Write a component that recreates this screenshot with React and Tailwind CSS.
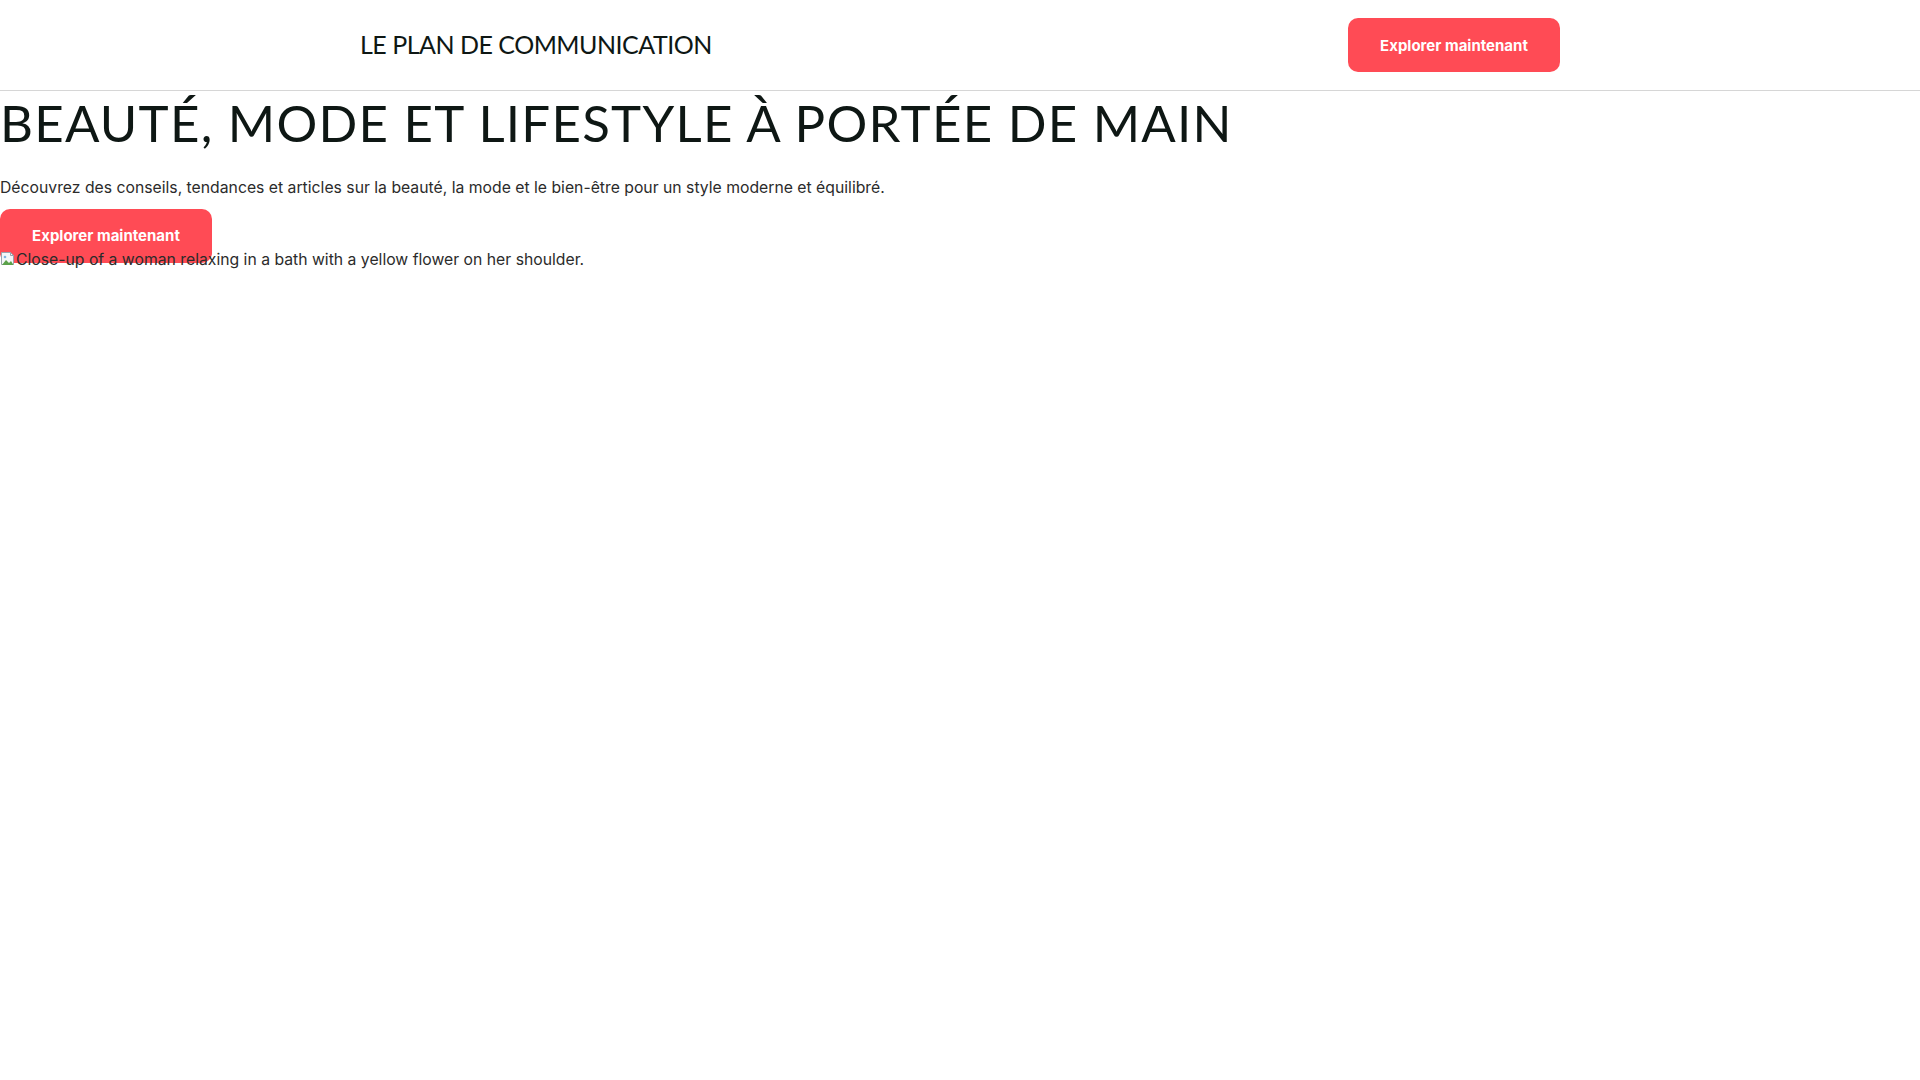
import React from 'react';

const BrokenImage = () => (
    <svg width="16" height="16" viewBox="0 0 16 16" className="inline-block align-[-2px]">
        <path d="M1.5 1.5h9l3 3v9h-12z" fill="#f4f6f8" stroke="#9aa3ad" />
        <path d="M10.5 1.5v3h3" fill="none" stroke="#9aa3ad" />
        <path d="M2 14l4-5 3 3 2-2 2.5 4z" fill="#5aa14a" />
        <circle cx="5" cy="6" r="1.3" fill="#7fb3e0" />
    </svg>
);

const App = () => {
    return (
        <div className="min-h-screen bg-white text-[#1c1c1c] font-['Inter',sans-serif]">
            {/* En-tête */}
            <header className="h-[91px] border-b border-[#d6d6d6]">
                <div className="max-w-[1200px] h-full mx-auto flex items-center justify-between">
                    <span className="font-['Lato',sans-serif] text-[25px] tracking-[-0.5px] text-[#0e1714] uppercase">
                        Le plan de communication
                    </span>
                    <button className="w-[212px] h-[54px] pt-[2px] rounded-[10px] bg-[#ff4b55] text-white text-[15px] font-bold">
                        Explorer maintenant
                    </button>
                </div>
            </header>

            {/* Hero */}
            <section>
                <h1 className="pt-[2px] font-['Lato',sans-serif] text-[51px] leading-[60px] tracking-[1.25px] text-[#0e1714] uppercase">
                    Beauté, mode et lifestyle à portée de main
                </h1>
                <p className="mt-[23px] text-[15.75px] leading-6 text-[#2b2b2b]">
                    Découvrez des conseils, tendances et articles sur la beauté, la mode et le bien-être pour un style moderne et équilibré.
                </p>
                <button className="mt-[9px] mb-[-15px] block w-[212px] h-[54px] rounded-[10px] bg-[#ff4b55] text-white text-[15px] font-bold">
                    Explorer maintenant
                </button>
                <div className="text-[15.75px] leading-6 text-[#2b2b2b]">
                    <BrokenImage />
                    Close-up of a woman relaxing in a bath with a yellow flower on her shoulder.
                </div>
            </section>
        </div>
    );
};

export default App;
